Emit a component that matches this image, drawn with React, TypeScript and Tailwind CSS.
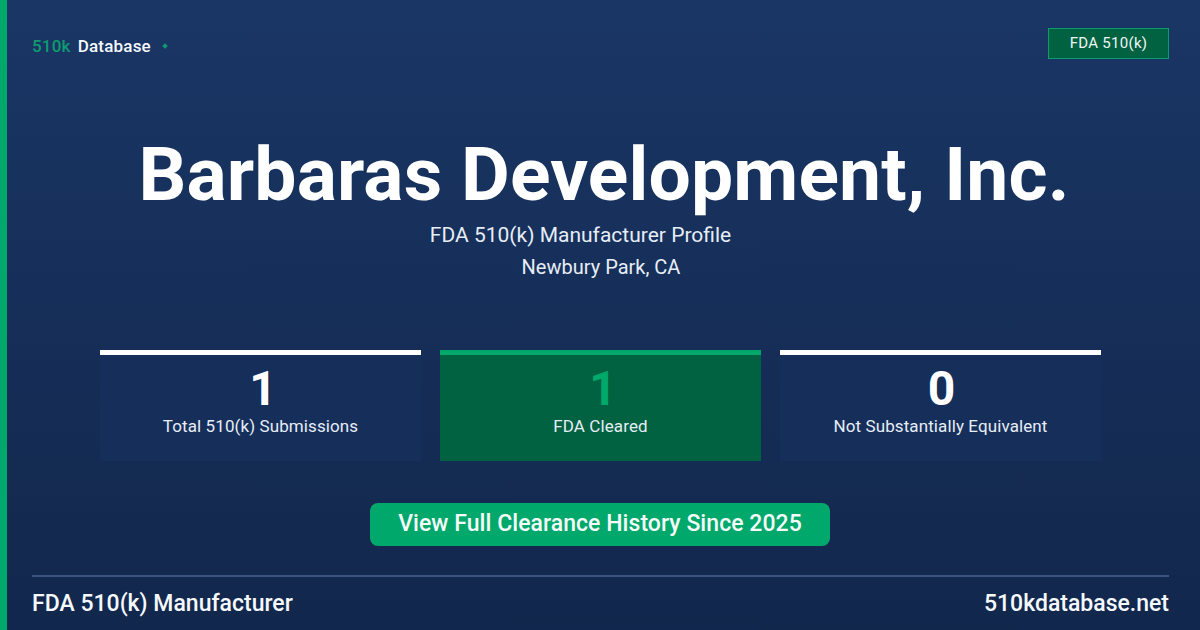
import React from "react";

const stats = [
  { value: "1", label: "Total 510(k) Submissions", box: "bg-[#162f5a] border-white", valueColor: "text-white", shift: "pl-[5px]" },
  { value: "1", label: "FDA Cleared", box: "bg-[#006241] border-[#00a86b]", valueColor: "text-[#00a86b]", shift: "pl-[5px]" },
  { value: "0", label: "Not Substantially Equivalent", box: "bg-[#162f5a] border-white", valueColor: "text-white", shift: "pl-[2px]" },
];

const App = () => {
  return (
    <div className="w-[1200px] h-[630px] overflow-hidden flex flex-col border-l-[7px] border-[#00a86b] bg-gradient-to-b from-[#1a3665] to-[#12274c] font-['Roboto',sans-serif] text-white">
      <div className="flex justify-between items-start pl-[25px] pr-[31px] pt-[28px]">
        <div className="flex items-center h-[36px] pt-[1px] text-[17px] font-medium tracking-[0.2px]">
          <span className="text-[#0f9a70]">510k</span>
          <span className="ml-[7px] text-[#f5f8fc]">Database</span>
          <span className="ml-[12px] mb-[2px] w-[4px] h-[4px] rotate-45 bg-[#0f9a70]" />
        </div>
        <div className="w-[121px] h-[31px] flex items-center justify-center bg-[#006241] border border-[#0f9a70] text-[15px] tracking-[0.3px] text-[#f0f5f5]">
          FDA 510(k)
        </div>
      </div>

      <div className="flex flex-col items-center pt-[67px] pl-[1px]">
        <h1 className="text-[75px] leading-[86px] font-bold tracking-[0.15px] whitespace-nowrap">Barbaras Development, Inc.</h1>
        <p className="mt-[2px] mr-[47px] text-[21px] leading-[32px] text-[#e6edf6]">FDA 510(k) Manufacturer Profile</p>
        <p className="mr-[6px] text-[20px] leading-[32px] text-[#e6edf6]">Newbury Park, CA</p>
      </div>

      <div className="flex gap-[19px] pl-[93px] mt-[67px]">
        {stats.map((s, i) => (
          <div key={i} className={`w-[321px] h-[111px] flex flex-col items-center border-t-[5px] ${s.box}`}>
            <div className={`mt-[6px] text-[48px] leading-[56px] font-bold ${s.shift} ${s.valueColor}`}>{s.value}</div>
            <div className="-mt-[1px] text-[17px] leading-[20px] tracking-[0.1px] text-[#e6edf6]">{s.label}</div>
          </div>
        ))}
      </div>

      <div className="flex justify-center pr-[7px] mt-[42px]">
        <div className="w-[460px] h-[43px] flex items-center justify-center rounded-[8px] bg-[#00a86b] text-[23px] font-medium tracking-[0.05px] text-[#f5fbf9]">
          View Full Clearance History Since 2025
        </div>
      </div>

      <div className="flex justify-between items-center mt-[29px] ml-[25px] mr-[31px] pt-[14px] border-t-2 border-[#3a5584] text-[23px] leading-[26px] font-medium text-[#f5f8fc]">
        <span>FDA 510(k) Manufacturer</span>
        <span>510kdatabase.net</span>
      </div>
    </div>
  );
};

export default App;
